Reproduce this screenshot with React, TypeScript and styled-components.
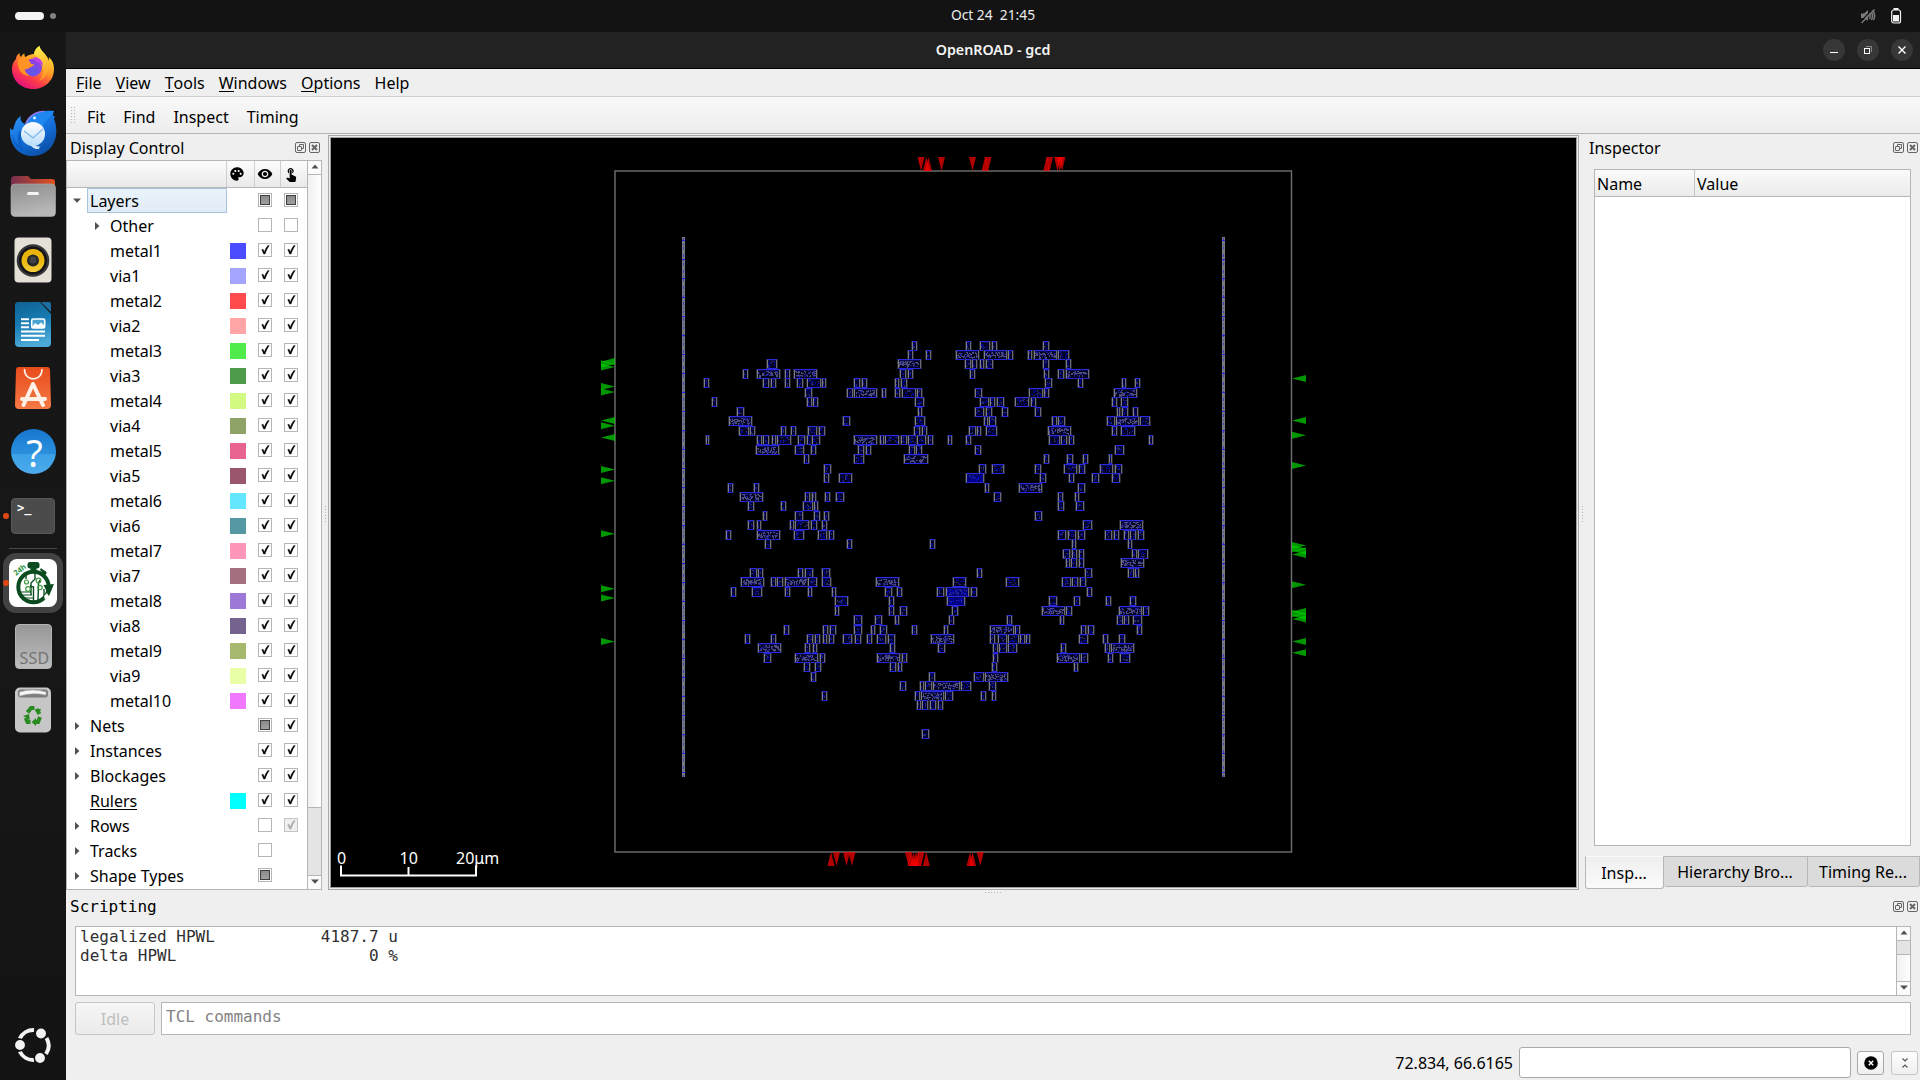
import React from "react";
import styled, { createGlobalStyle, css } from "styled-components";
import { MdPalette, MdVisibility, MdTouchApp } from "react-icons/md";

const GlobalStyle = createGlobalStyle`
  * { box-sizing: border-box; }
  html, body { margin: 0; padding: 0; background: #161616; }
  body { width: 1920px; height: 1080px; overflow: hidden; }
`;

const EDGE = "#b6b6b6";

/* ---------- data ---------- */

type Check = "on" | "off" | "partial" | "disabled" | null;

interface TreeRow {
  name: string;
  depth: 0 | 1;
  arrow?: "open" | "closed";
  color?: string;
  vis: Check;
  sel: Check;
  selected?: boolean;
  link?: boolean;
}

const layer = (name: string, color: string): TreeRow => ({ name, depth: 1, color, vis: "on", sel: "on" });

const treeRows: TreeRow[] = [
  { name: "Layers", depth: 0, arrow: "open", vis: "partial", sel: "partial", selected: true },
  { name: "Other", depth: 1, arrow: "closed", vis: "off", sel: "off" },
  layer("metal1", "#4b4bff"),
  layer("via1", "#a5a5ff"),
  layer("metal2", "#ff4b4b"),
  layer("via2", "#ffa5a5"),
  layer("metal3", "#50eb4b"),
  layer("via3", "#4f9a4b"),
  layer("metal4", "#d2fa82"),
  layer("via4", "#8fa268"),
  layer("metal5", "#e96391"),
  layer("via5", "#9a566c"),
  layer("metal6", "#64e6ff"),
  layer("via6", "#5498a3"),
  layer("metal7", "#ff96b9"),
  layer("via7", "#a4707f"),
  layer("metal8", "#9e78d7"),
  layer("via8", "#74638f"),
  layer("metal9", "#a6b86e"),
  layer("via9", "#e8ffa8"),
  layer("metal10", "#f078ff"),
  { name: "Nets", depth: 0, arrow: "closed", vis: "partial", sel: "on" },
  { name: "Instances", depth: 0, arrow: "closed", vis: "on", sel: "on" },
  { name: "Blockages", depth: 0, arrow: "closed", vis: "on", sel: "on" },
  { name: "Rulers", depth: 0, color: "#00ffff", vis: "on", sel: "on", link: true },
  { name: "Rows", depth: 0, arrow: "closed", vis: "off", sel: "disabled" },
  { name: "Tracks", depth: 0, arrow: "closed", vis: "off", sel: null },
  { name: "Shape Types", depth: 0, arrow: "closed", vis: "partial", sel: null },
];

/* Placed instances: one list per placement row, as x/width pairs in thirds of a pixel. */
const placement: Record<number, number[]> = {
  0: [697,14, 859,13, 901,29, 936,14, 1090,18],
  1: [685,14, 738,15, 828,68, 913,68, 985,15, 1044,13, 1063,68, 1135,31],
  2: [262,30, 655,67, 855,18, 877,15, 901,11, 919,19, 1090,18, 1159,13],
  3: [189,14, 231,68, 315,14, 343,68, 661,16, 683,16, 871,13, 1093,14, 1135,18, 1159,68],
  4: [73,14, 249,19, 273,14, 315,14, 350,18, 382,40, 427,10, 523,17, 547,13, 646,10, 662,18, 1096,19, 1194,14, 1325,14, 1366,15],
  5: [376,19, 501,17, 523,69, 607,12, 646,14, 667,40, 711,15, 886,21, 1048,40, 1093,15, 1302,68],
  6: [97,14, 381,14, 400,15, 705,26, 901,25, 931,15, 952,21, 1006,40, 1054,15, 1297,15, 1324,19],
  7: [172,19, 715,12, 886,25, 917,20, 967,17, 1066,18, 1312,9, 1326,19, 1360,13],
  8: [147,68, 490,21, 705,29, 913,11, 927,22, 1117,14, 1135,19, 1282,22, 1309,68, 1381,30],
  9: [177,29, 211,15, 304,13, 334,15, 385,25, 417,17, 701,18, 727,15, 867,20, 892,12, 919,31, 1105,68, 1297,14, 1324,42],
  10: [77,11, 232,13, 249,19, 277,11, 292,42, 355,21, 381,14, 396,23, 523,69, 600,11, 615,42, 663,17, 685,25, 711,26, 743,15, 805,10, 859,14, 1108,31, 1143,18, 1167,14, 1408,12],
  11: [228,68, 346,26, 394,13, 535,16, 558,14, 688,16, 708,18, 886,18, 1306,25],
  12: [373,15, 523,30, 673,70, 1093,14, 1162,18, 1210,13, 1286,10],
  13: [431,21, 898,21, 936,37, 1066,18, 1152,40, 1198,17, 1260,40, 1305,22],
  14: [431,15, 477,38, 859,52, 1081,16, 1168,13, 1237,21, 1297,22],
  15: [145,15, 223,15, 916,10, 1017,68, 1194,21],
  16: [181,67, 376,15, 397,11, 436,13, 469,22, 943,19, 1135,15, 1186,10],
  17: [205,16, 304,14, 370,28, 403,12, 1135,18, 1189,22],
  18: [249,11, 346,22, 403,16, 431,15, 1066,19],
  19: [205,16, 231,13, 331,11, 346,40, 394,17, 427,14, 1210,25, 1321,67],
  20: [139,13, 231,68, 343,29, 415,26, 447,14, 1135,23, 1163,25, 1194,21, 1275,20, 1302,14, 1333,13, 1351,18, 1375,17],
  21: [255,17, 501,14, 751,14, 1177,12, 1344,11],
  22: [1150,19, 1177,15, 1198,13, 1355,15, 1375,29],
  23: [1159,10, 1174,18, 1197,14, 1324,69],
  24: [211,19, 235,13, 355,13, 374,24, 427,22, 892,15, 1216,19, 1344,18, 1366,12],
  25: [184,69, 274,14, 292,18, 316,68, 385,25, 427,25, 589,68, 820,37, 979,37, 1147,25, 1177,16, 1201,17],
  26: [154,14, 216,29, 316,13, 385,11, 457,12, 616,19, 651,14, 770,21, 798,70, 873,19, 1222,13],
  27: [466,37, 628,13, 801,53, 1108,22, 1183,17, 1279,13, 1351,18],
  28: [466,10, 628,13, 661,19, 817,16, 1086,68, 1159,18, 1317,68, 1390,18],
  29: [523,22, 586,20, 646,11, 808,15, 982,13, 1141,12, 1312,16, 1333,13, 1360,27],
  30: [312,14, 430,15, 451,17, 523,22, 574,10, 601,21, 697,14, 793,10, 931,70, 1006,13, 1204,15, 1225,18, 1371,14],
  31: [196,14, 274,14, 381,17, 405,14, 430,12, 447,15, 490,25, 526,16, 562,14, 592,27, 625,20, 754,69, 931,15, 955,25, 985,31, 1021,13, 1039,11, 1198,25, 1270,15, 1317,17],
  32: [235,67, 376,13, 400,11, 631,14, 775,21, 940,13, 958,22, 985,27, 1144,13, 1275,15, 1294,68],
  33: [253,19, 346,68, 420,14, 592,69, 667,13, 940,13, 1132,68, 1204,19, 1285,15, 1321,28],
  34: [373,18, 406,16, 631,18, 654,11, 937,13, 1183,10],
  35: [394,13, 748,17, 883,28, 916,69],
  36: [661,16, 721,11, 735,22, 760,79, 844,28, 928,19],
  37: [427,14, 705,14, 723,69, 796,23, 904,15, 936,11],
  38: [711,11, 727,18, 751,18, 774,15],
  41: [727,20],
};

const BLOCK_FILLED = new Set(["14:859", "26:798", "27:801"]);

type PinDir = "up" | "down" | "left" | "right";
const verticalPins: [number, number, PinDir][] = [
  [921, 157, "down"], [926.3, 157, "up"], [928.5, 157, "up"], [941.5, 157, "down"], [972.5, 157, "down"],
  [985, 157, "up"], [988, 157, "down"], [1046.7, 157, "up"], [1049.5, 157, "down"],
  [1057.5, 157, "down"], [1059.8, 157, "down"], [1062, 157, "down"],
  [831, 852, "up"], [836.5, 852, "down"], [846.5, 852, "down"], [852, 852, "down"],
  [908.5, 852, "down"], [911, 852, "up"], [913.5, 852, "up"], [916, 852, "up"], [918, 852, "up"], [921, 852, "down"], [926.3, 852, "up"],
  [970, 852, "up"], [972.6, 852, "up"], [980.3, 852, "down"],
];
const horizontalPins: [number, number, PinDir][] = [
  [601, 361.5, "left"], [601, 364, "right"], [601, 367, "right"], [601, 386.5, "right"], [601, 392, "right"],
  [601, 420.5, "left"], [601, 425.7, "right"], [601, 437.5, "left"], [601, 469.5, "right"], [601, 480.7, "right"],
  [601, 533.7, "right"], [601, 588.7, "right"], [601, 598, "right"], [601, 641.5, "right"],
  [1292, 378.5, "left"], [1292, 420.5, "left"], [1292, 435.3, "right"], [1292, 465.5, "right"],
  [1292, 545.5, "right"], [1292, 548.5, "right"], [1292, 551, "left"], [1292, 554.5, "left"],
  [1292, 584.7, "right"], [1292, 611.5, "left"], [1292, 613.5, "right"], [1292, 616, "left"], [1292, 619, "left"],
  [1292, 641.5, "left"], [1292, 652.7, "left"],
];

/* ---------- shell ---------- */

const Desktop = styled.div`
  width: 1920px;
  height: 1080px;
  display: grid;
  grid-template: 32px 1048px / 66px 1854px;
  background: #161616;
  color: #000;
  font: 16px/20px "Noto Sans", sans-serif;
`;

const TopBar = styled.header`
  grid-column: 1 / 3;
  display: grid;
  grid-template-columns: 1fr auto 1fr;
  align-items: center;
  padding-left: 66px;
  background: #131313;
`;

const Workspaces = styled.div`
  display: flex;
  align-items: center;
  gap: 6px;
  margin-left: -51px;
`;
const Pill = styled.span`
  width: 29px;
  height: 8px;
  border-radius: 4px;
  background: #f4f4f4;
`;
const Dot = styled.span`
  width: 6px;
  height: 6px;
  border-radius: 50%;
  background: #828282;
`;
const Clock = styled.div`
  font: 13.8px/20px "Noto Sans", sans-serif;
  color: #ececec;
  white-space: pre;
  padding-bottom: 2px;
`;
const StatusIcons = styled.div`
  display: flex;
  justify-content: flex-end;
  align-items: center;
  gap: 14px;
  padding-right: 18px;
`;

const Dock = styled.nav`
  display: flex;
  flex-direction: column;
  align-items: center;
  background: linear-gradient(#161616, #171717 60%, #131313);
`;
const DockSlot = styled.div<{ $h?: number }>`
  position: relative;
  width: 66px;
  height: ${(p) => p.$h ?? 64}px;
  flex: none;
  display: flex;
  align-items: center;
  justify-content: center;
`;
const RunningDot = styled.i`
  position: absolute;
  left: 3px;
  top: calc(50% - 3px);
  width: 5.5px;
  height: 6px;
  border-radius: 50%;
  background: #dd4814;
`;
const DockRule = styled.hr`
  width: 48px;
  height: 1px;
  margin: 0;
  border: 0;
  background: #494949;
`;
const ActiveTile = styled.div`
  width: 60px;
  height: 60px;
  border-radius: 13px;
  display: flex;
  align-items: center;
  justify-content: center;
  background: #424242;
`;
const DockSpacer = styled.div`
  flex: 1;
`;

const Window = styled.main`
  display: flex;
  flex-direction: column;
  background: #efefef;
  overflow: hidden;
`;

const TitleBar = styled.div`
  flex: none;
  height: 37px;
  display: grid;
  grid-template-columns: 1fr auto 1fr;
  align-items: center;
  background: #222;
  border-bottom: 1px solid #000;
`;
const Title = styled.h1`
  grid-column: 2;
  margin: 0;
  font: 600 14.25px/20px "Noto Sans", sans-serif;
  color: #f5f5f5;
`;
const WindowButtons = styled.div`
  display: flex;
  justify-content: flex-end;
  gap: 12px;
  padding-right: 7px;
`;
const RoundButton = styled.button`
  width: 22px;
  height: 22px;
  padding: 0;
  border: 0;
  border-radius: 50%;
  display: flex;
  align-items: center;
  justify-content: center;
  background: #373737;
`;

const MenuBar = styled.div`
  flex: none;
  height: 28px;
  display: flex;
  gap: 14px;
  padding: 5px 0 0 10px;
  border-bottom: 1px solid #cfcfcf;
  line-height: 19px;
`;
const MenuItem = styled.span`
  white-space: nowrap;
`;
const Mnemonic = styled.span`
  border-bottom: 1px solid #000;
  display: inline-block;
  height: 18px;
`;

const ToolBar = styled.div`
  flex: none;
  height: 37px;
  display: flex;
  align-items: center;
  gap: 18px;
  padding: 4px 0 0 5px;
  background: linear-gradient(#f9f9f9, #ededed);
  border-bottom: 1px solid #b4b4b4;
`;
const Grip = styled.i<{ $across?: boolean }>`
  width: ${(p) => (p.$across ? 17 : 5)}px;
  height: ${(p) => (p.$across ? 1 : 17)}px;
  flex: none;
  background-image: ${(p) =>
    p.$across
      ? "repeating-linear-gradient(90deg, #b4b4b4 0 1px, transparent 1px 3px)"
      : "repeating-linear-gradient(#b4b4b4 0 1px, transparent 1px 3px)"};
  ${(p) =>
    !p.$across &&
    css`
      -webkit-mask: repeating-linear-gradient(90deg, #000 0 1px, transparent 1px 3px);
      mask: repeating-linear-gradient(90deg, #000 0 1px, transparent 1px 3px);
    `}
`;
const ToolGrip = styled(Grip)`
  margin: -4px -7px 0 0;
`;

const Workspace = styled.div`
  flex: none;
  height: 756px;
  display: grid;
  grid-template-columns: 256px 6px 1251px 6px 335px;
`;

const Splitter = styled.div`
  display: flex;
  align-items: center;
  justify-content: center;
`;
const SplitterDots = styled.i`
  width: 1px;
  height: 17px;
  margin-top: 4px;
  background: repeating-linear-gradient(#b0b0b0 0 1px, transparent 1px 3px);
`;

/* ---------- dock panels ---------- */

const Panel = styled.section`
  display: flex;
  flex-direction: column;
  min-width: 0;
`;
const PanelTitle = styled.div<{ $h: number; $pad: string; $mono?: boolean }>`
  flex: none;
  height: ${(p) => p.$h}px;
  padding: ${(p) => p.$pad};
  display: flex;
  align-items: center;
  justify-content: space-between;
  ${(p) => p.$mono && css`font: 16px/20px "DejaVu Sans Mono", monospace;`}
`;
const TitleIcons = styled.span`
  display: flex;
  gap: 3px;
  padding-bottom: 1px;
`;

const Tree = styled.div`
  flex: 1;
  display: grid;
  grid-template-columns: 240px 14px;
  background: #fff;
  border: 1px solid ${EDGE};
  min-height: 0;
  overflow: hidden;
`;
const TreeBody = styled.div`
  display: flex;
  flex-direction: column;
`;
const columns = css`
  display: grid;
  grid-template-columns: 160px 28px 26px 26px;
`;
const TreeHeader = styled.div`
  ${columns}
  height: 27px;
  flex: none;
  background: linear-gradient(#fcfcfc, #e9e9e9);
  border-bottom: 1px solid ${EDGE};
`;
const HeadCell = styled.div<{ $last?: boolean }>`
  display: flex;
  align-items: center;
  justify-content: center;
  border-right: ${(p) => (p.$last ? 0 : 1)}px solid #cecece;
  &:not(:first-child) { padding: 0 6px 1px 0; }
  &:nth-child(2) { padding-right: 8px; }
`;
const Row = styled.div`
  ${columns}
  flex: none;
  height: 25px;
  align-items: center;
`;
const NameCell = styled.div<{ $depth: number }>`
  display: grid;
  grid-template-columns: 20px 1fr;
  align-items: center;
  height: 25px;
  padding-left: ${(p) => p.$depth * 20}px;
`;
const ArrowBox = styled.span`
  display: flex;
  align-items: center;
  justify-content: center;
`;
const Label = styled.span<{ $selected?: boolean; $link?: boolean }>`
  height: 25px;
  padding: 4px 0 0 ${(p) => (p.$selected ? 2 : 3)}px;
  line-height: 19px;
  ${(p) =>
    p.$selected &&
    css`
      border: 1px solid #aac4dc;
      padding-top: 3px;
      background: linear-gradient(#e9f3fb, #e0ebf5);
    `}
  & > span {
    display: inline-block;
    height: 18px;
    border-bottom: ${(p) => (p.$link ? 1 : 0)}px solid #000;
  }
`;
const SwatchSlot = styled.span`
  display: flex;
  padding-left: 3px;
`;
const Swatch = styled.i<{ $color: string }>`
  width: 16px;
  height: 16px;
  background: ${(p) => p.$color};
`;
const CheckSlot = styled.span`
  padding: 0 0 1px 3px;
  display: flex;
`;
const Box = styled.i<{ $dim?: boolean }>`
  width: 14px;
  height: 14px;
  display: flex;
  align-items: center;
  justify-content: center;
  border: 1px solid ${(p) => (p.$dim ? "#c4c4c4" : "#b6b6b6")};
  background: ${(p) => (p.$dim ? "#efefef" : "#fff")};
`;
const PartialMark = styled.i`
  width: 10px;
  height: 10px;
  border: 1px solid #404040;
  background: linear-gradient(#8a8a8a, #a0a0a0);
`;

const ScrollTrack = styled.div`
  display: flex;
  flex-direction: column;
  border-left: 1px solid ${EDGE};
  background: linear-gradient(90deg, #f0f0f0, #fff);
`;
const ScrollButton = styled.div<{ $side: "top" | "bottom" }>`
  height: 14px;
  flex: none;
  display: flex;
  align-items: center;
  justify-content: center;
  padding-bottom: 2px;
  background: #fbfbfb;
  border-${(p) => (p.$side === "top" ? "bottom" : "top")}: 1px solid ${EDGE};
`;
const ScrollGap = styled.div`
  flex: 1;
`;
const ScrollThumb = styled.div<{ $h: number; $joined?: boolean }>`
  height: ${(p) => p.$h}px;
  flex: none;
  background: #e4e4e4;
  border-top: ${(p) => (p.$joined ? 0 : 1)}px solid ${EDGE};
  border-bottom: ${(p) => (p.$joined ? 1 : 0)}px solid ${EDGE};
`;

const LayoutFrame = styled.div`
  height: 755px;
  margin-top: 1px;
  padding: 2px;
  border: 1px solid #a9a9a9;
  background: #9f9f9f;
  box-shadow: inset 0 0 0 1px #ececec;
`;
const Canvas = styled.svg`
  display: block;
  background: #000;
`;

const InspectorTable = styled.div`
  height: 677px;
  margin: 0 9px;
  border: 1px solid ${EDGE};
  background: #fff;
`;
const InspectorHead = styled.div`
  height: 27px;
  display: grid;
  grid-template-columns: 99px 1fr;
  background: linear-gradient(#fafafa, #ebebeb);
  border-bottom: 1px solid ${EDGE};
`;
const InspectorCell = styled.div`
  padding: 5px 0 0 2px;
  line-height: 19px;
  & + & { border-left: 1px solid #c4c4c4; }
`;
const Tabs = styled.div`
  display: flex;
  align-items: flex-start;
  margin-top: 10px;
  line-height: 19px;
`;
const Tab = styled.div<{ $w: number; $active?: boolean }>`
  width: ${(p) => p.$w}px;
  height: ${(p) => (p.$active ? 33 : 31)}px;
  padding-top: ${(p) => (p.$active ? 7 : 6)}px;
  padding-right: 1px;
  flex: none;
  text-align: center;
  white-space: nowrap;
  border: 1px solid ${EDGE};
  border-top-color: ${(p) => (p.$active ? "transparent" : EDGE)};
  border-left-width: ${(p) => (p.$active ? 1 : 0)}px;
  border-radius: 0 0 3px 3px;
  background: ${(p) => (p.$active ? "linear-gradient(#efefef, #fafafa)" : "#dbdbdb")};
`;

const Scripting = styled.section`
  flex: 1;
  display: flex;
  flex-direction: column;
`;
const SplitRow = styled.div`
  height: 3px;
  flex: none;
  display: flex;
  justify-content: center;
  align-items: flex-end;
`;
const Output = styled.div`
  flex: none;
  height: 70px;
  margin: 0 9px;
  display: grid;
  grid-template-columns: 1fr 14px;
  border: 1px solid ${EDGE};
  background: #fff;
`;
const OutputText = styled.pre`
  margin: 0;
  padding: 0 0 0 4px;
  font: 16px/19px "DejaVu Sans Mono", monospace;
  color: #303030;
`;
const CommandRow = styled.div`
  flex: none;
  display: flex;
  gap: 6px;
  margin: 6px 9px 0;
  height: 33px;
`;
const IdleButton = styled.button`
  width: 80px;
  padding: 1px 0 0;
  border: 1px solid #c6c6c6;
  border-radius: 3px;
  background: linear-gradient(#f6f6f6, #ebebeb);
  color: #bebebe;
  font: 16px/20px "Noto Sans", sans-serif;
`;
const CommandInput = styled.div`
  flex: 1;
  padding: 4px 0 0 4px;
  border: 1px solid ${EDGE};
  background: #fff;
  color: #828282;
  font: 16px/19px "DejaVu Sans Mono", monospace;
`;
const StatusBar = styled.footer`
  display: flex;
  align-items: center;
  justify-content: flex-end;
  margin-top: 12px;
  padding-right: 2px;
`;
const Coordinates = styled.span`
  margin-right: 6px;
`;
const StatusField = styled.div`
  width: 332px;
  height: 31px;
  margin-right: 6px;
  border: 1px solid #a8a8a8;
  border-radius: 3px;
  background: #fff;
`;
const SmallButton = styled.button<{ $light?: boolean }>`
  width: 27px;
  height: 24px;
  padding: 0;
  display: flex;
  align-items: center;
  justify-content: center;
  border: 1px solid ${(p) => (p.$light ? "#c6c6c6" : "#a8a8a8")};
  border-radius: 3px;
  background: linear-gradient(#fefefe, #efefef);
  & + & { margin-left: 7px; }
`;

/* ---------- small drawings ---------- */

const Arrow = ({ dir }: { dir: "up" | "down" | "right" }) => {
  const d = { up: "M0.5 4.5 L4 0.5 L7.5 4.5Z", down: "M0 0.5 H8 L4 4.7Z", right: "M0 0 L4.4 4 L0 8Z" }[dir];
  return (
    <svg width={dir === "right" ? 5 : 8} height={dir === "right" ? 8 : 5}>
      <path d={d} fill="#505050" />
    </svg>
  );
};

const CheckBox = ({ state }: { state: Check }) => {
  if (!state) return null;
  return (
    <Box $dim={state === "disabled"}>
      {state === "partial" && <PartialMark />}
      {(state === "on" || state === "disabled") && (
        <svg width="12" height="12" viewBox="0 0 12 12">
          <path
            d="M2.7 5.6 L4.2 5.3 L5.2 8 C6.3 5.3 7.4 3.4 8.8 1.6 L10.3 1.5 C8.5 4 7.2 6.7 6.1 10.1 L4.6 10.1Z"
            fill={state === "on" ? "#000" : "#a6a6a6"}
            stroke={state === "on" ? "#000" : "#a6a6a6"}
            strokeWidth=".3"
          />
        </svg>
      )}
    </Box>
  );
};

const FloatIcon = () => (
  <svg width="11" height="11" fill="none" stroke="#666">
    <rect x=".5" y=".5" width="10" height="10" rx="1.5" />
    <rect x="2.5" y="4.5" width="4" height="4" rx=".5" />
    <path d="M4.5 4V2.5H8.5V6.5H7" />
  </svg>
);
const CloseIcon = () => (
  <svg width="11" height="11" fill="none" stroke="#666">
    <rect x=".5" y=".5" width="10" height="10" rx="1.5" />
    <path d="M3 3 L8 8 M8 3 L3 8" strokeWidth="2" />
  </svg>
);
const PanelIcons = () => (
  <TitleIcons>
    <FloatIcon />
    <CloseIcon />
  </TitleIcons>
);

/* ---------- dock icons ---------- */

const Firefox = () => (
  <svg width="44" height="44" viewBox="0 0 44 44">
    <defs>
      <linearGradient id="fxBody" x1=".8" y1=".1" x2=".25" y2=".95">
        <stop offset="0" stopColor="#ffe43a" />
        <stop offset=".4" stopColor="#ff9a24" />
        <stop offset=".7" stopColor="#ff3f45" />
        <stop offset="1" stopColor="#e3127c" />
      </linearGradient>
      <linearGradient id="fxFlame" x1="0" y1="0" x2=".2" y2="1">
        <stop offset="0" stopColor="#fff44f" />
        <stop offset="1" stopColor="#ff9b26" stopOpacity=".9" />
      </linearGradient>
      <radialGradient id="fxGlobe" cx=".5" cy=".75" r=".75">
        <stop offset="0" stopColor="#5a5be8" />
        <stop offset="1" stopColor="#a23ae0" />
      </radialGradient>
    </defs>
    <path d="M5 14 C5 11 7 9 8.5 8 C8.5 10 9 11 10 12 C11 9.5 12.5 8.8 13.5 8.5 C13.3 10 13.5 11 14.5 12 C19 9 22 9 23 9 C23.5 5 26 2.5 28.5 1 C29 5 33 7 36 12 C37 14 37.5 15 37.7 16 C38 14 38 13 37.7 12 C41.5 15 43 19 43 24 C43 36 33.5 44 22 44 C10 44 1 35 1 24 C1 20 2 17 5 14Z" fill="url(#fxBody)" />
    <path d="M23 9 C23.5 5 26 2.5 28.5 1 C29 5 33 7 36 12 C41 20 37 33 28 36 C35 28 33 16 23 9Z" fill="url(#fxFlame)" />
    <circle cx="22" cy="22.5" r="9" fill="url(#fxGlobe)" />
    <path d="M7 14 C12 12 18 13 20 19 C24 19 24 20 20 22 C17 23.5 16 25 13.5 24 C14 27 16 29 19 31 C9 31 6 22 7 14Z" fill="#ff9425" />
    <path d="M22 12.5 C27 11 32 15 32 21 C30 18 28 17 26 17Z" fill="#c242e8" />
  </svg>
);

const Thunderbird = () => (
  <svg width="48" height="46" viewBox="0 0 48 46">
    <defs>
      <linearGradient id="tbBody" x1="0" y1="0" x2=".6" y2="1">
        <stop offset="0" stopColor="#2f9af6" />
        <stop offset=".6" stopColor="#1470dc" />
        <stop offset="1" stopColor="#0c50a8" />
      </linearGradient>
      <linearGradient id="tbMail" x1="0" y1="0" x2="0" y2="1">
        <stop offset="0" stopColor="#fff" />
        <stop offset="1" stopColor="#b8dcfa" />
      </linearGradient>
    </defs>
    <path d="M16 14 C20 3 31 0 45 1 C44 3 44 5 44 6 L46 6 L45 9 C51 23 46 45 24 46 C10 46 0 36 1 18 C2 19 3 20 4 20 C6 12 8 8 12 6 C10 10 14 13 16 14Z" fill="url(#tbBody)" />
    <path d="M16 14 C20 4 29 0 37 1 C30 3 26 6 25 9 L17 14Z" fill="#9a78e8" />
    <path d="M18 14 C21 4 31 1 45 1 C43 5 40 8 36 12 C32 15 35 24 36 30 C31 16 22 14 18 14Z" fill="#1e88f0" />
    <path d="M4 23 C2 34 9 42 18 42 C13 38 10 31 13 20 C8 21 8 31 11 36 C6 33 4 28 4 23Z" fill="#0d5fc4" />
    <circle cx="24" cy="24" r="12" fill="url(#tbMail)" />
    <path d="M15 21 L24 28 L34 19" stroke="#7eb8ea" fill="none" strokeWidth="1.3" />
    <path d="M21 35 C25 34 29 38 32 36 C28 39 32 40 29 39 C24 39 24 37 21 35Z" fill="#cfe6fa" />
    <circle cx="25.5" cy="8" r="1.4" fill="#dff" />
  </svg>
);

const Files = () => (
  <svg width="46" height="42" viewBox="0 0 46 42">
    <defs>
      <linearGradient id="flBack"><stop offset="0" stopColor="#77304f" /><stop offset="1" stopColor="#e0521f" /></linearGradient>
      <linearGradient id="flFront" x1="0" y1="0" x2=".3" y2="1"><stop offset="0" stopColor="#8c8c8c" /><stop offset="1" stopColor="#b8b8b8" /></linearGradient>
    </defs>
    <path d="M1 14 V5 Q1 1 5 1 H18 L21 4 H42 Q45 4 45 7 V14Z" fill="url(#flBack)" />
    <rect x="1" y="9" width="44.5" height="32.5" rx="4" fill="url(#flFront)" stroke="#b0b0b0" strokeWidth=".6" />
    <rect x="17" y="17" width="12" height="3" rx="1.5" fill="#f4f4f4" />
  </svg>
);

const Rhythmbox = () => (
  <svg width="38" height="46" viewBox="0 0 38 46">
    <defs><linearGradient id="rbCone" x1="0" y1="0" x2="0" y2="1"><stop offset="0" stopColor="#eab409" /><stop offset=".5" stopColor="#eab70e" /><stop offset="1" stopColor="#f6cf3c" /></linearGradient></defs>
    <rect x=".5" y=".5" width="37" height="45" rx="4" fill="#e4e0d6" />
    <circle cx="19" cy="23.5" r="16.3" fill="#35353a" />
    <circle cx="19" cy="23.5" r="14" fill="#151517" />
    <circle cx="19" cy="23.5" r="11.5" fill="url(#rbCone)" />
    <circle cx="19" cy="23.5" r="6" fill="#26262a" />
    <circle cx="19" cy="23" r="3.5" fill="#424247" />
  </svg>
);

const Writer = () => (
  <svg width="38" height="46" viewBox="0 0 38 46">
    <defs><linearGradient id="lwPage" x1="0" y1="0" x2=".2" y2="1"><stop offset="0" stopColor="#0f6293" /><stop offset=".5" stopColor="#177bb2" /><stop offset="1" stopColor="#4aa9d8" /></linearGradient></defs>
    <path d="M4 1 H26 L37 13 V42 Q37 46 33 46 H5 Q1 46 1 42 V4 Q1 1 4 1Z" fill="url(#lwPage)" />
    <path d="M27 1 H35 Q37 1 37 3 V11Z" fill="#1d6f9f" />
    <path d="M7 18.3H15 M7 22.3H15 M7 26.3H15 M7 30.5H31 M7 34.8H31 M7 39H25" stroke="#fff" strokeWidth="2" />
    <rect x="17.7" y="18" width="13" height="9" rx="1.5" fill="#49a3d0" stroke="#fff" strokeWidth="1.6" />
    <path d="M18 26 L21 22 L24 24 L27 21.5 L31 25 V27 H18Z" fill="#fff" />
  </svg>
);

const AppCenter = () => (
  <svg width="38" height="44" viewBox="0 0 38 44">
    <defs><linearGradient id="acBag" x1="0" y1="0" x2="0" y2="1"><stop offset="0" stopColor="#e84c1c" /><stop offset="1" stopColor="#f57a45" /></linearGradient></defs>
    <path d="M5 1 H33 Q36 1 36 4 L37 39 Q37 43 33 43 H5 Q1 43 1 39 L2 4 Q2 1 5 1Z" fill="url(#acBag)" />
    <path d="M10.5 3.5 C10.5 16 28 16 28 3.5" fill="none" stroke="#fff4ed" strokeWidth="1.6" strokeLinecap="round" />
    <path d="M19 18 L9.5 39 M19 18 L29 39 M8 33 H31" stroke="#fff0e8" strokeWidth="4" fill="none" strokeLinecap="round" />
  </svg>
);

const HelpGlyph = styled.div`
  width: 45px;
  height: 45px;
  border-radius: 50%;
  display: flex;
  align-items: center;
  justify-content: center;
  padding-left: 3px;
  background: linear-gradient(#1777cf, #2a90dd 55%, #3ba0e8 55%, #4cabeb);
  color: #fff;
  font: 38px/44px "Noto Sans", sans-serif;
`;

const TerminalTile = styled.div`
  width: 44px;
  height: 36px;
  border: 1px solid #595959;
  border-radius: 4px;
  padding: 2px 0 0 5px;
  background: #4b4b4b;
  color: #fff;
  font: bold 12px/14px "DejaVu Sans Mono", monospace;
`;

const Stopwatch = () => (
  <svg width="48" height="48" viewBox="0 0 48 48">
    <rect width="48" height="48" rx="8" fill="#fff" />
    <g fill="none" stroke="#0a4c1f">
      <circle cx="24.5" cy="28" r="15.2" strokeWidth="4" />
      <path d="M24.5 8 V12" strokeWidth="6" />
      <path d="M36 12 L33.5 16" strokeWidth="3" />
      <path d="M29 42 L29.5 24 L31 21 M35 40 V30 M24.5 43 V28 L21 27 M26 14 V20 L22 24 V36 M17 16 V20" strokeWidth="1.4" />
      <path d="M12 33 H22 M12 36 H23 M15 39 H24" strokeWidth="1.2" />
      <g stroke="#3f9a40" strokeWidth="1.2">
        <circle cx="17.5" cy="23" r="2" /><circle cx="19" cy="30" r="2.3" /><circle cx="29.5" cy="21.5" r="2.3" /><circle cx="31" cy="28.5" r="2.2" />
      </g>
    </g>
    <rect x="18.5" y="3" width="12" height="6.5" rx="2.5" fill="#0a4c1f" />
    <path d="M32 9 L38 14 L36 16 L31 11Z" fill="#0a4c1f" />
    <path d="M34.5 26 L45 25 L40 37Z" fill="#0a4c1f" />
    <path d="M35 37 L38 34 L40 38 L36 41Z" fill="#fff" />
    <text x="7" y="17" transform="rotate(-37 7 17)" fontFamily="Noto Sans, sans-serif" fontSize="7.5" fontWeight="700" fill="#2c9440">24h</text>
  </svg>
);

const DriveTile = styled.div`
  width: 37px;
  height: 45px;
  border: 1px solid #b4b4b4;
  border-radius: 4px;
  padding: 24px 0 0 4px;
  background: linear-gradient(#979797, #bdbdbd);
  color: #747474;
  font: 16px/18px "Noto Sans", sans-serif;
  letter-spacing: 0.2px;
`;

const Trash = () => (
  <svg width="38" height="46" viewBox="0 0 38 46">
    <rect x="1" y=".5" width="36" height="45" rx="5" fill="#c6c6c6" />
    <rect x="4" y="2.5" width="30" height="8" rx="3" fill="#7e7e7e" />
    <path d="M5.5 5 Q19 1 32 5 V8 Q19 5 5.5 9Z" fill="#f8f8f8" stroke="#aaa" strokeWidth=".6" />
    <g fill="none" stroke="#2a8a22" strokeWidth="4">
      <path d="M13.5 25.5 L17 21 H20.5" />
      <path d="M22.5 22 L25.5 27" />
      <path d="M26 30 L24 35 H20" />
      <path d="M16.5 35 H13.5 L11.7 31" />
    </g>
    <path d="M21 22 L27 22 L25 27Z M22 31 V39 L17.5 35Z M9 29 L15 27 L16 33Z" fill="#2a8a22" />
  </svg>
);

const UbuntuLogo = () => (
  <svg width="38" height="38" viewBox="0 0 38 38">
    <g fill="none" stroke="#f2f2f2" strokeWidth="4">
      <path d="M5.8 12.5 A15 15 0 0 1 20 4" />
      <path d="M32.5 12 A15 15 0 0 1 32 28" />
      <path d="M20 34 A15 15 0 0 1 5.8 25.5" />
    </g>
    <g fill="#f2f2f2" stroke="#131313" strokeWidth="1.5">
      <circle cx="6" cy="19" r="5.7" />
      <circle cx="27" cy="7.5" r="5.7" />
      <circle cx="26" cy="32" r="5.7" />
    </g>
  </svg>
);

/* ---------- layout canvas ---------- */

const CANVAS_X = 331;
const CANVAS_Y = 138;
const ROW_PITCH = 9.467;

const noise = (seed: number) => {
  const v = Math.sin(seed * 12.9898) * 43758.5453;
  return v - Math.floor(v);
};

const Cell = ({ row, x3, w3 }: { row: number; x3: number; w3: number }) => {
  const x = Math.round(680 + x3 / 3);
  const w = Math.round(680 + (x3 + w3) / 3) - x - 1;
  const y = Math.round(340.5 + row * ROW_PITCH);
  const h = 9;
  const filled = BLOCK_FILLED.has(`${row}:${x3}`);
  const wide = w3 > 60;
  const count = Math.round(w * (wide ? 2.4 : 1.2));
  const marks = Array.from({ length: count }, (_, i) => {
    const s = x3 * 7 + row * 131 + i * 3;
    const px = x + 1 + Math.floor(noise(s) * Math.max(w - 2, 1));
    const py = y + 2 + Math.floor(noise(s + 1) * 6);
    const tall = w < 5 || noise(s + 2) > 0.5;
    const light = filled ? "#20208c" : wide ? "#4c4c7c" : "#2c2c60";
    const deep = filled ? "#0000b8" : wide ? "#1c1c90" : "#000090";
    return (
      <rect
        key={i}
        x={px}
        y={py}
        width={tall ? 1 : 2}
        height={tall ? 2 : 1}
        fill={(i % 3 > 0) === wide ? light : deep}
      />
    );
  });
  return (
    <g shapeRendering="crispEdges">
      <rect x={x} y={y} width={w + 1} height={h + 1} fill={filled ? "#000078" : w3 > 34 ? "#04041c" : "#030326"} />
      {marks}
      <rect x={x - 1} y={y} width={1} height={h + 1} fill="#28282c" />
      <rect x={x + w + 1} y={y} width={1} height={h + 1} fill="#242428" />
      <rect x={x} y={y} width={1} height={h + 1} fill="#7c7c84" />
      <rect x={x + w} y={y} width={1} height={h + 1} fill="#6a6a76" />
      <rect x={x} y={y} width={w + 1} height={1} fill="#2a2ae0" />
      <rect x={x} y={y + h} width={w + 1} height={1} fill="#2626e4" />
      <rect x={x + 1} y={y + 1} width={w - 1} height={1} fill="#0a0a50" />
    </g>
  );
};

const pinPath = (x: number, y: number, dir: PinDir) => {
  if (dir === "up") return `M${x} ${y}L${x + 3.5} ${y + 14}H${x - 3.5}Z`;
  if (dir === "down") return `M${x - 3.5} ${y}H${x + 3.5}L${x} ${y + 14}Z`;
  if (dir === "left") return `M${x} ${y}L${x + 14} ${y - 3.5}V${y + 3.5}Z`;
  return `M${x} ${y - 3.5}V${y + 3.5}L${x + 14} ${y}Z`;
};

const PowerStrap = ({ x }: { x: number }) => (
  <g>
    <rect x={x} y={237} width={3} height={540} fill="#77777f" />
    <path d={`M${x + 1.5} 238V777`} stroke="#3c3cc0" strokeDasharray="3 3 1 2 2 5" />
    <path d={`M${x + 1.5} 240V777`} stroke="#2222f0" strokeWidth="3" strokeDasharray="1 18" />
  </g>
);

const LayoutView = () => (
  <Canvas width="1245" height="749" viewBox={`${CANVAS_X} ${CANVAS_Y} 1245 749`}>
    <rect x="615" y="171" width="676.5" height="681" fill="none" stroke="#707070" strokeWidth="1.4" />
    <PowerStrap x={682} />
    <PowerStrap x={1222} />
    {Object.entries(placement).flatMap(([row, list]) =>
      list
        .filter((_, i) => i % 2 === 0)
        .map((x3, i) => <Cell key={`${row}-${i}`} row={Number(row)} x3={x3} w3={list[i * 2 + 1]} />)
    )}
    {verticalPins.map(([x, y, d], i) => (
      <path key={`v${i}`} d={pinPath(x, y, d)} fill="#ff0000" fillOpacity=".7" />
    ))}
    {horizontalPins.map(([x, y, d], i) => (
      <path key={`h${i}`} d={pinPath(x, y, d)} fill="#00d000" fillOpacity=".72" />
    ))}
    <path d="M341 865.5V875.5H476V865.5" fill="none" stroke="#fff" strokeWidth="2" />
    <path d="M408.5 867V876" stroke="#fff" strokeWidth="2" />
    <g fill="#fff" fontFamily="Noto Sans, sans-serif" fontSize="16">
      <text x="337" y="864">0</text>
      <text x="399.5" y="864">10</text>
      <text x="456" y="864">20μm</text>
    </g>
  </Canvas>
);

/* ---------- page ---------- */

const menus: [string, boolean][] = [
  ["File", true], ["View", true], ["Tools", true], ["Windows", true], ["Options", true], ["Help", false],
];

export default function App() {
  return (
    <>
      <GlobalStyle />
      <Desktop>
        <TopBar>
          <Workspaces><Pill /><Dot /></Workspaces>
          <Clock>Oct 24  21:45</Clock>
          <StatusIcons>
            <svg width="16" height="16" viewBox="0 0 16 16" fill="none" stroke="#7c7c7c" strokeWidth="1.5">
              <path d="M1 5.5H4L8 2V13L4 10H1Z" fill="#7c7c7c" stroke="none" />
              <path d="M9.5 5 Q11 8 9.5 11 M11.5 4 Q13.5 8 11.5 12 M13 2 Q16 8 13.5 12" />
              <path d="M0.3 14 L13 0.5" stroke="#131313" strokeWidth="1.2" />
              <path d="M1.5 15 L14.5 1.5" strokeWidth="1.3" />
            </svg>
            <svg width="12" height="16" viewBox="0 0 12 16">
              <rect x="1.7" y="2" width="8.8" height="13" rx="2" fill="none" stroke="#f2f2f2" strokeWidth="1.2" />
              <rect x="3.5" y="0" width="5" height="2" fill="#f2f2f2" />
              <rect x="3" y="7" width="6" height="6.5" fill="#f2f2f2" />
            </svg>
          </StatusIcons>
        </TopBar>

        <Dock>
          <DockSlot $h={70}><Firefox /></DockSlot>
          <DockSlot $h={62}><Thunderbird /></DockSlot>
          <DockSlot><Files /></DockSlot>
          <DockSlot><Rhythmbox /></DockSlot>
          <DockSlot><Writer /></DockSlot>
          <DockSlot><AppCenter /></DockSlot>
          <DockSlot $h={63}><HelpGlyph>?</HelpGlyph></DockSlot>
          <DockSlot $h={65}><RunningDot /><TerminalTile>&gt;_</TerminalTile></DockSlot>
          <DockRule />
          <DockSlot $h={67}><RunningDot /><ActiveTile><Stopwatch /></ActiveTile></DockSlot>
          <DockSlot $h={61}><DriveTile>SSD</DriveTile></DockSlot>
          <DockSlot $h={66}><Trash /></DockSlot>
          <DockSpacer />
          <DockSlot $h={71}><UbuntuLogo /></DockSlot>
        </Dock>

        <Window>
          <TitleBar>
            <Title>OpenROAD - gcd</Title>
            <WindowButtons>
              <RoundButton><svg width="10" height="10"><path d="M1 7.5H9" stroke="#fff" /></svg></RoundButton>
              <RoundButton>
                <svg width="10" height="10" fill="none"><rect x="1.5" y="3.5" width="5" height="5" stroke="#fff" /><path d="M3 1.5H8.5V7" stroke="#8a8a8a" /></svg>
              </RoundButton>
              <RoundButton><svg width="10" height="10"><path d="M1.5 1.5L8.5 8.5M8.5 1.5L1.5 8.5" stroke="#fff" strokeWidth="1.4" /></svg></RoundButton>
            </WindowButtons>
          </TitleBar>

          <MenuBar>
            {menus.map(([m, mnemonic]) => (
              <MenuItem key={m}>
                {mnemonic ? <Mnemonic>{m[0]}</Mnemonic> : m[0]}
                {m.slice(1)}
              </MenuItem>
            ))}
          </MenuBar>

          <ToolBar>
            <ToolGrip />
            <span>Fit</span><span>Find</span><span>Inspect</span><span>Timing</span>
          </ToolBar>

          <Workspace>
            <Panel>
              <PanelTitle $h={26} $pad="1px 2px 0 4px"><span>Display Control</span><PanelIcons /></PanelTitle>
              <Tree>
                <TreeBody>
                  <TreeHeader>
                    <HeadCell />
                    <HeadCell><MdPalette size={16} /></HeadCell>
                    <HeadCell><MdVisibility size={16} /></HeadCell>
                    <HeadCell $last><MdTouchApp size={16} /></HeadCell>
                  </TreeHeader>
                  {treeRows.map((r) => (
                    <Row key={r.name}>
                      <NameCell $depth={r.depth}>
                        <ArrowBox>{r.arrow && <Arrow dir={r.arrow === "open" ? "down" : "right"} />}</ArrowBox>
                        <Label $selected={r.selected} $link={r.link}><span>{r.name}</span></Label>
                      </NameCell>
                      <SwatchSlot>{r.color && <Swatch $color={r.color} />}</SwatchSlot>
                      <CheckSlot><CheckBox state={r.vis} /></CheckSlot>
                      <CheckSlot><CheckBox state={r.sel} /></CheckSlot>
                    </Row>
                  ))}
                </TreeBody>
                <ScrollTrack>
                  <ScrollButton $side="top"><Arrow dir="up" /></ScrollButton>
                  <ScrollGap />
                  <ScrollThumb $h={68} />
                  <ScrollButton $side="bottom"><Arrow dir="down" /></ScrollButton>
                </ScrollTrack>
              </Tree>
            </Panel>
            <Splitter><SplitterDots /></Splitter>
            <LayoutFrame><LayoutView /></LayoutFrame>
            <Splitter><SplitterDots /></Splitter>
            <Panel>
              <PanelTitle $h={35} $pad="0 2px 8px 4px"><span>Inspector</span><PanelIcons /></PanelTitle>
              <InspectorTable>
                <InspectorHead><InspectorCell>Name</InspectorCell><InspectorCell>Value</InspectorCell></InspectorHead>
              </InspectorTable>
              <Tabs>
                <Tab $w={79} $active>Insp...</Tab>
                <Tab $w={144}>Hierarchy Bro...</Tab>
                <Tab $w={112}>Timing Re...</Tab>
              </Tabs>
            </Panel>
          </Workspace>

          <Scripting>
            <SplitRow><Grip $across /></SplitRow>
            <PanelTitle $h={33} $pad="0 2px 5px 4px" $mono><span>Scripting</span><PanelIcons /></PanelTitle>
            <Output>
              <OutputText>{"legalized HPWL           4187.7 u\ndelta HPWL                    0 %"}</OutputText>
              <ScrollTrack>
                <ScrollButton $side="top"><Arrow dir="up" /></ScrollButton>
                <ScrollThumb $h={14} $joined />
                <ScrollGap />
                <ScrollButton $side="bottom"><Arrow dir="down" /></ScrollButton>
              </ScrollTrack>
            </Output>
            <CommandRow><IdleButton>Idle</IdleButton><CommandInput>TCL commands</CommandInput></CommandRow>
            <StatusBar>
              <Coordinates>72.834, 66.6165</Coordinates>
              <StatusField />
              <SmallButton>
                <svg width="14" height="14"><circle cx="7" cy="7" r="6.8" /><path d="M4.8 4.8L9.2 9.2M9.2 4.8L4.8 9.2" stroke="#fff" strokeWidth="1.5" /></svg>
              </SmallButton>
              <SmallButton $light>
                <svg width="8" height="12" fill="none" stroke="#555" strokeWidth="1.2"><path d="M1.5 1.5L4 4L6.5 1.5M1.5 10.5L4 8L6.5 10.5" /></svg>
              </SmallButton>
            </StatusBar>
          </Scripting>
        </Window>
      </Desktop>
    </>
  );
}
